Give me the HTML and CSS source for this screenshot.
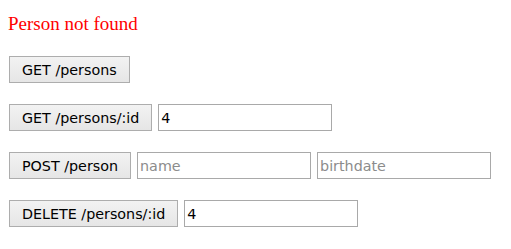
FILE: index.html
```html
<!DOCTYPE html>
<html>
<head>
<meta charset="utf-8">
<link rel="stylesheet" href="styles.css">
</head>
<body>
<div class="page">
  <div class="message">Person not found</div>
  <div class="row">
    <button class="btn">GET /persons</button>
  </div>
  <div class="row">
    <button class="btn">GET /persons/:id</button>
    <input class="field" type="text" value="4">
  </div>
  <div class="row">
    <button class="btn">POST /person</button>
    <input class="field" type="text" placeholder="name">
    <input class="field" type="text" placeholder="birthdate">
  </div>
  <div class="row">
    <button class="btn">DELETE /persons/:id</button>
    <input class="field" type="text" value="4">
  </div>
</div>
</body>
</html>
```
FILE: styles.css
```css
html, body {
  margin: 0;
  background: #ffffff;
}
.page {
  padding: 13px 9px 0 9px;
  display: flex;
  flex-direction: column;
  gap: 21px;
}
.message {
  font-family: "Liberation Serif", serif;
  font-size: 19px;
  color: #ff0000;
  margin-left: -1px;
  height: 22px;
  line-height: 22px;
}
.row {
  display: flex;
  align-items: center;
  gap: 6px;
  height: 27px;
}
.btn {
  box-sizing: border-box;
  height: 27px;
  padding: 0 12px;
  margin: 0;
  border: 1px solid #adadad;
  border-radius: 0;
  background: linear-gradient(#f2f2f2, #e6e6e6);
  font-family: "DejaVu Sans", sans-serif;
  font-size: 14.3px;
  color: #000;
}
.field {
  box-sizing: border-box;
  width: 174px;
  height: 27px;
  margin: 0;
  padding: 0 2px;
  border: 1px solid #a9a9a9;
  border-radius: 0;
  outline: none;
  font-family: "DejaVu Sans", sans-serif;
  font-size: 14.3px;
  color: #000;
  background: #fff;
}
.field::placeholder {
  color: #8c8c8c;
}
```
